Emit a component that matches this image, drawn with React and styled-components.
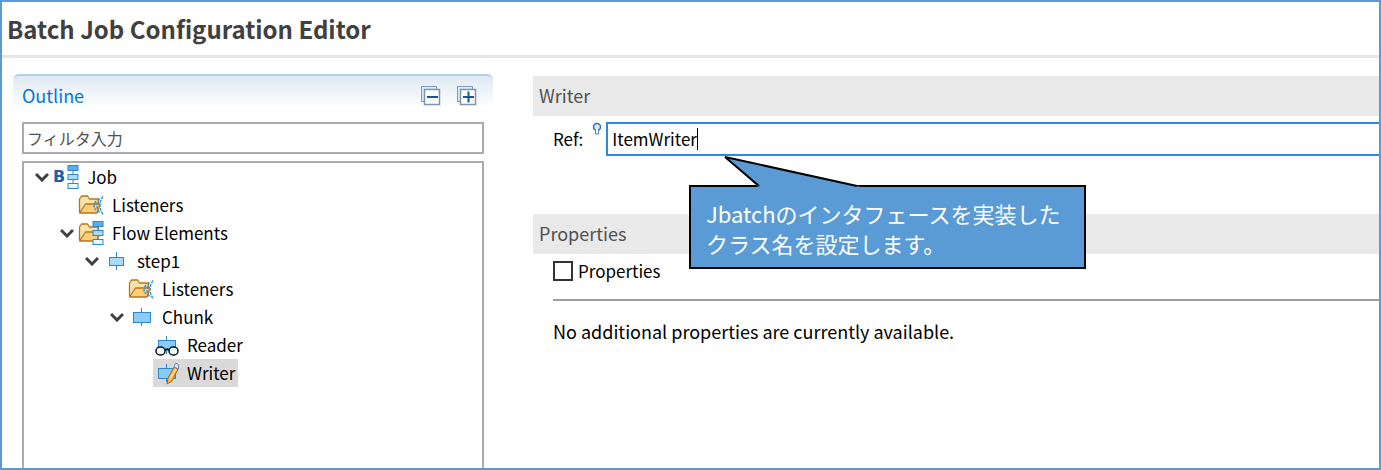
import React, { useState } from 'react'
import styled, { createGlobalStyle } from 'styled-components'

const treeRows = [
    { label: 'Job', depth: 0, icon: 'job', open: true },
    { label: 'Listeners', depth: 1, icon: 'listeners' },
    { label: 'Flow Elements', depth: 1, icon: 'flow', open: true },
    { label: 'step1', depth: 2, icon: 'step', open: true },
    { label: 'Listeners', depth: 3, icon: 'listeners' },
    { label: 'Chunk', depth: 3, icon: 'chunk', open: true },
    { label: 'Reader', depth: 4, icon: 'reader' },
    { label: 'Writer', depth: 4, icon: 'writer', selected: true },
]

const FlowBoxes = ({ x = 0 }) => (
    <g transform={`translate(${x} 0)`} stroke="#2f86cc">
        <path d="M6 6v14" fill="none" />
        <rect x="1" y="1.5" width="10" height="5" fill="#5aaef0" />
        <rect x="1" y="10.5" width="10" height="5" fill="#a5dcfb" />
        <rect x="1" y="19.5" width="10" height="5" fill="#e4fbff" />
    </g>
)

const Folder = () => (
    <g stroke="#b8741a" strokeWidth="1.3" strokeLinejoin="round">
        <path d="M1.5 20V7l2-3h6l2 3h9v5" fill="#fbe2a6" />
        <path d="M1.5 21l6-9h14.500l-3 9z" fill="#fccf78" />
    </g>
)

const Block = () => (
    <g stroke="#2f86cc">
        <path d="M13.5 4v18" />
        <rect x="5.5" y="8.5" width="17" height="10" fill="#8accf8" />
    </g>
)

function NodeIcon({ name }) {
    switch (name) {
        case 'job':
            return (
                <svg width="14" height="26" viewBox="0 0 14 26"><FlowBoxes x={2} /></svg>
            )
        case 'listeners':
            return (
                <svg width="26" height="26" viewBox="0 0 26 26">
                    <Folder />
                    <path d="M18 9q-4 5 0 9M21.500 6.500q-5 7 0 14M25 4.500q-6 9 0 18" fill="none" stroke="#3f95d8" strokeWidth="1.500" strokeDasharray="3 1" />
                </svg>
            )
        case 'flow':
            return (
                <svg width="26" height="26" viewBox="0 0 26 26"><Folder /><FlowBoxes x={14} /></svg>
            )
        case 'step':
            return (
                <svg width="26" height="26" viewBox="0 0 26 26">
                    <path d="M13.5 4v18" stroke="#2f86cc" />
                    <rect x="6.5" y="9.5" width="14" height="8" fill="#a5dcfb" stroke="#2f86cc" />
                </svg>
            )
        case 'chunk':
            return (
                <svg width="26" height="26" viewBox="0 0 26 26"><Block /></svg>
            )
        case 'reader':
            return (
                <svg width="26" height="26" viewBox="0 0 26 26">
                    <Block />
                    <g fill="#e4fbff" stroke="#111" strokeWidth="1.500">
                        <rect x="3" y="15" width="9" height="8" rx="4" />
                        <rect x="16" y="15" width="9" height="8" rx="4" />
                        <path d="M12 18q2-2 4 0" fill="none" />
                    </g>
                </svg>
            )
        default:
            return (
                <svg width="26" height="26" viewBox="0 0 26 26">
                    <Block />
                    <path d="M14 24l1-6 6-11 4 2-6 12z" fill="#f8b84e" stroke="#a3611a" />
                    <path d="M17 19l6-10" stroke="#fff0b8" />
                    <path d="M21 7l1.500-4 3 1.500V9z" fill="#dfe6f5" stroke="#6f86b5" />
                </svg>
            )
    }
}

const Chevron = () => (
    <svg width="14" height="10" viewBox="0 0 14 10">
        <path d="M1 2l6 6 6-6" fill="none" stroke="#404040" strokeWidth="3" />
    </svg>
)

const StackIcon = ({ plus }) => (
    <svg width="21" height="21" viewBox="0 0 21 21">
        <path d="M1.5 16.5h3v-12h12v-3h-15z" fill="#d9ecf8" stroke="#8298b4" />
        <rect x="4.5" y="4.5" width="15" height="15" fill="#fff" stroke="#7f92ae" strokeWidth="1.500" />
        <path d={plus ? 'M7 12h11M12.500 6.500v11' : 'M7 12h11'} stroke="#16588e" strokeWidth="2" />
    </svg>
)

function App() {
    const [filter, setFilter] = useState('')
    const [refName, setRefName] = useState('ItemWriter')
    const [checked, setChecked] = useState(false)

    return (
        <Editor>
            <GlobalStyle />
            <Title>Batch Job Configuration Editor</Title>
            <Content>
                <Outline>
                    <OutlineHeader>
                        <OutlineTitle>Outline</OutlineTitle>
                        <ToolButton aria-label="Collapse all"><StackIcon /></ToolButton>
                        <ToolButton aria-label="Expand all"><StackIcon plus /></ToolButton>
                    </OutlineHeader>
                    <FilterInput
                        aria-label="フィルタ入力"
                        placeholder="フィルタ入力"
                        value={filter}
                        onChange={(e) => setFilter(e.target.value)}
                    />
                    <Tree>
                        {treeRows.map((row, index) => (
                            <TreeRow key={index} $depth={row.depth}>
                                <Toggle>{row.open && <Chevron />}</Toggle>
                                <Node $selected={row.selected}>
                                    <NodeImage>
                                        {row.icon === 'job' && <JobLetter>B</JobLetter>}
                                        <NodeIcon name={row.icon} />
                                    </NodeImage>
                                    {row.label}
                                </Node>
                            </TreeRow>
                        ))}
                    </Tree>
                </Outline>
                <Details>
                    <SectionTitle>Writer</SectionTitle>
                    <RefRow>
                        <label htmlFor="ref">Ref:</label>
                        <Hint width="10" height="14" viewBox="0 0 10 14">
                            <circle cx="5" cy="5" r="3.500" fill="#cfeafa" stroke="#3a6f9f" strokeWidth="1.500" />
                            <path d="M3.500 7v5h3V7" fill="#fff" stroke="#4d86b5" />
                        </Hint>
                        <RefField>
                            <RefInput id="ref" value={refName} onChange={(e) => setRefName(e.target.value)} />
                            <Caret />
                        </RefField>
                        <Callout>
                            <Pointer width="144" height="32" viewBox="0 0 144 32">
                                <path d="M4 2l33 30h103z" fill="#5b9bd5" />
                                <path d="M38 31L4 2l132 29" fill="none" stroke="#000" strokeWidth="2" />
                            </Pointer>
                            Jbatchのインタフェースを実装した<br />クラス名を設定します。
                        </Callout>
                    </RefRow>
                    <SectionTitle>Properties</SectionTitle>
                    <SectionBody>
                        <CheckLabel>
                            <CheckBox type="checkbox" checked={checked} onChange={(e) => setChecked(e.target.checked)} />
                            Properties
                        </CheckLabel>
                        <Separator />
                        <Message>No additional properties are currently available.</Message>
                    </SectionBody>
                </Details>
            </Content>
        </Editor>
    )
}

export default App;

const GlobalStyle = createGlobalStyle`
    * {
        box-sizing: border-box;
    }

    body {
        margin: 0;
        background: #fff;
    }

    input, button {
        font: inherit;
    }
`
const Editor = styled.div`
    display: flex;
    flex-direction: column;
    min-height: 100vh;
    border: 2px solid #5b9bd5;
    overflow: hidden;
    color: #000;
    font: 17px/28px "Noto Sans CJK JP", sans-serif;
`
const Title = styled.h1`
    margin: 0;
    padding: 10px 5px;
    border-bottom: 3px solid #e7e7e7;
    color: #404040;
    font-size: 24px;
    line-height: 33px;
`
const Content = styled.div`
    display: flex;
    flex: 1;
    gap: 40px;
    padding: 16px 0 0 11px;
`
const Outline = styled.section`
    display: flex;
    flex-direction: column;
    flex: 0 1 480px;
    padding: 0 9px;
    border-top: 2px solid #b3d0ea;
    border-radius: 6px 6px 0 0;
    background: linear-gradient(#dfe9f3, #fff 32px);
`
const OutlineHeader = styled.header`
    display: flex;
    align-items: center;
    gap: 15px;
    height: 46px;
    padding: 0 7px 8px 0;
`
const OutlineTitle = styled.h2`
    flex: 1;
    margin: 0;
    color: #0078d7;
    font-size: 18px;
    font-weight: 400;
`
const ToolButton = styled.button`
    display: flex;
    padding: 0;
    border: 0;
    background: none;
`
const FilterInput = styled.input`
    height: 32px;
    padding: 0 3px;
    border: 2px solid #ababb0;
    outline: 0;
    font-size: 16px;

    &::placeholder {
        color: #505050;
        opacity: 1;
    }
`
const Tree = styled.ul`
    flex: 1;
    margin: 7px 0 0;
    padding: 0 0 0 11px;
    border: 2px solid #ababb0;
    border-bottom: 0;
    list-style: none;
`
const TreeRow = styled.li`
    display: flex;
    height: 28px;
    padding-left: ${(props) => props.$depth * 25}px;
`
const Toggle = styled.span`
    display: flex;
    align-items: center;
    width: 18px;
`
const Node = styled.span`
    display: flex;
    align-items: center;
    gap: 8px;
    padding-right: 3px;
    background: ${(props) => (props.$selected ? '#d9d9d9' : 'transparent')};
`
const NodeImage = styled.span`
    display: flex;
    align-items: center;
`
const JobLetter = styled.b`
    color: #1d5fa8;
    font-family: "DejaVu Sans", sans-serif;
    font-size: 16px;
`
const Details = styled.section`
    flex: 1;
    min-width: 0;
    padding-top: 2px;
`
const SectionTitle = styled.h2`
    margin: 0;
    padding: 5px 6px 7px;
    background: #e9e9e9;
    color: #505050;
    font-size: 18px;
    font-weight: 400;
`
const RefRow = styled.div`
    position: relative;
    display: flex;
    padding: 6px 0 58px 20px;
    line-height: 34px;
`
const Hint = styled.svg`
    margin: 0 4px 0 9px;
`
const RefField = styled.div`
    position: relative;
    flex: 1;
`
const RefInput = styled.input`
    display: block;
    width: 100%;
    height: 34px;
    padding: 0 4px;
    border: 2px solid #2b8ae0;
    border-right: 0;
    outline: 0;
`
const Caret = styled.span`
    position: absolute;
    top: 6px;
    left: 91px;
    width: 1px;
    height: 22px;
    background: #000;
`
const Callout = styled.div`
    position: absolute;
    top: 69px;
    left: 156px;
    width: 397px;
    padding: 11px 15px 9px;
    border: 2px solid #000;
    background: #5b9bd5;
    color: #fff;
    font-size: 22px;
    line-height: 30px;
`
const Pointer = styled.svg`
    position: absolute;
    top: -32px;
    left: 30px;
`
const SectionBody = styled.div`
    padding: 3px 0 0 20px;
`
const CheckLabel = styled.label`
    display: flex;
    align-items: center;
    gap: 5px;
`
const CheckBox = styled.input`
    appearance: none;
    width: 20px;
    height: 20px;
    margin: 0;
    border: 2px solid #333;
    background: #fff;
`
const Separator = styled.hr`
    margin: 14px 0 16px;
    border: 0;
    border-top: 2px solid #a0a0a0;
`
const Message = styled.p`
    margin: 0;
    font-size: 18px;
`
